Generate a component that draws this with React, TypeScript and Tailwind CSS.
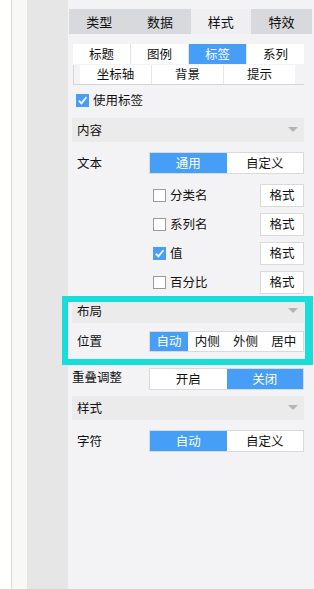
import React from "react";

const FONT = { fontFamily: '"Noto Sans CJK SC", "Noto Sans", sans-serif' };
const BLUE = "bg-[#469ef6]";

function Check({ checked }: { checked?: boolean }) {
  return checked ? (
    <div className={`w-[13px] h-[13px] shrink-0 ${BLUE} flex items-center justify-center`}>
      <svg width="11" height="11" viewBox="0 0 11 11">
        <path d="M1.8 5.6 L4.4 8.3 L9.4 2.2" stroke="white" strokeWidth="1.8" fill="none" />
      </svg>
    </div>
  ) : (
    <div className="w-[13px] h-[13px] shrink-0 border border-[#9a9a9a] bg-white" />
  );
}

function Seg({ items, active, h = "h-[22px]" }: { items: string[]; active: number; h?: string }) {
  return (
    <div className={`flex shrink-0 w-[155px] ${h} border border-[#dadada] bg-white`}>
      {items.map((t, i) => (
        <div
          key={t}
          className={`flex-1 flex items-center justify-center text-[12.5px] leading-none ${
            i === active ? `${BLUE} text-white` : "text-[#111]"
          }`}
        >
          {t}
        </div>
      ))}
    </div>
  );
}

function Header({ title }: { title: string }) {
  return (
    <div className="flex items-center justify-between h-[24px] bg-[#ebebeb] pl-[5px] pr-[6px] text-[12.5px] text-[#111]">
      <span>{title}</span>
      <svg width="10" height="6" viewBox="0 0 10 6">
        <path d="M0 0 L10 0 L5 5 Z" fill="#b4b4b4" />
      </svg>
    </div>
  );
}

function OptRow({ label, checked, cls }: { label: string; checked?: boolean; cls: string }) {
  return (
    <div className={`flex items-center h-[23px] ${cls}`}>
      <div className="w-[81px] shrink-0" />
      <Check checked={checked} />
      <span className="ml-[4px] text-[12.5px] text-[#111] flex-1">{label}</span>
      <div className="w-[44px] h-[23px] shrink-0 border border-[#dadada] bg-white flex items-center justify-center text-[12.5px] text-[#111]">
        格式
      </div>
    </div>
  );
}

export default function App() {
  const tabs = ["类型", "数据", "样式", "特效"];
  const sub1 = ["标题", "图例", "标签", "系列"];
  const sub2 = ["坐标轴", "背景", "提示"];
  return (
    <div className="relative flex w-[314px] h-[589px] overflow-hidden" style={FONT}>
      <div className="w-[11px] shrink-0 bg-white" />
      <div className="w-[16px] shrink-0 border-l border-[#dcdcd6] bg-[#f8f8f6]" />
      <div className="w-[41px] shrink-0 bg-[#e6e6e6]" />
      <div className="w-[246px] shrink-0 bg-[#f3f3f5] pt-[9px] pl-[4px] pr-[10px]">
        <div className="flex h-[25px] w-[243px] -ml-[3px]">
          {tabs.map((t, i) => (
            <div
              key={t}
              className={`flex-1 flex items-center justify-center text-[13px] text-[#111] ${
                i === 2 ? "bg-[#efeff1]" : "bg-[#d8d9dc]"
              }`}
            >
              {t}
            </div>
          ))}
        </div>
        <div className="ml-[1px] mt-[10px] flex w-[231px] h-[20px] gap-px bg-[#e2e2e2]">
          {sub1.map((t, i) => (
            <div
              key={t}
              className={`flex-1 flex items-center justify-center text-[12.5px] ${
                i === 2 ? `${BLUE} text-white` : "bg-white text-[#111]"
              }`}
            >
              {t}
            </div>
          ))}
        </div>
        <div className="ml-[1px] mt-[1px] w-[231px] h-[20px] border-l border-b border-[#d6d6d6] pl-[6px]">
          <div className="flex w-[215px] h-full gap-px bg-[#e6e6e6]">
            {sub2.map((t) => (
              <div key={t} className="flex-1 bg-white flex items-center justify-center text-[12.5px] text-[#111]">
                {t}
              </div>
            ))}
          </div>
        </div>
        <div className="mt-[8px] h-[14px] flex items-center pl-[4px]">
          <Check checked />
          <span className="ml-[4px] text-[12.5px] text-[#111]">使用标签</span>
        </div>
        <div className="mt-[11px]">
          <Header title="内容" />
        </div>
        <div className="mt-[10px] flex items-center">
          <span className="w-[77px] shrink-0 pl-[5px] text-[12.5px] text-[#111]">文本</span>
          <Seg items={["通用", "自定义"]} active={0} />
        </div>
        <OptRow label="分类名" cls="mt-[10px]" />
        <OptRow label="系列名" cls="mt-[6px]" />
        <OptRow label="值" checked cls="mt-[6px]" />
        <OptRow label="百分比" cls="mt-[6px]" />
        <div className="mt-[5px]">
          <Header title="布局" />
        </div>
        <div className="mt-[8px] flex items-center">
          <span className="w-[77px] shrink-0 pl-[5px] text-[12.5px] text-[#111]">位置</span>
          <Seg items={["自动", "内侧", "外侧", "居中"]} active={0} h="h-[21px]" />
        </div>
        <div className="mt-[16px] flex items-start">
          <span className="w-[77px] shrink-0 text-[12.5px] text-[#111] leading-[18px]">重叠调整</span>
          <Seg items={["开启", "关闭"]} active={1} />
        </div>
        <div className="mt-[6px]">
          <Header title="样式" />
        </div>
        <div className="mt-[10px] flex items-center">
          <span className="w-[77px] shrink-0 pl-[5px] text-[12.5px] text-[#111]">字符</span>
          <Seg items={["自动", "自定义"]} active={0} />
        </div>
      </div>
      <div className="absolute left-[62px] top-[296px] w-[251px] h-[69px] border-[6px] border-r-[8px] border-[#1adcd9]" />
    </div>
  );
}
